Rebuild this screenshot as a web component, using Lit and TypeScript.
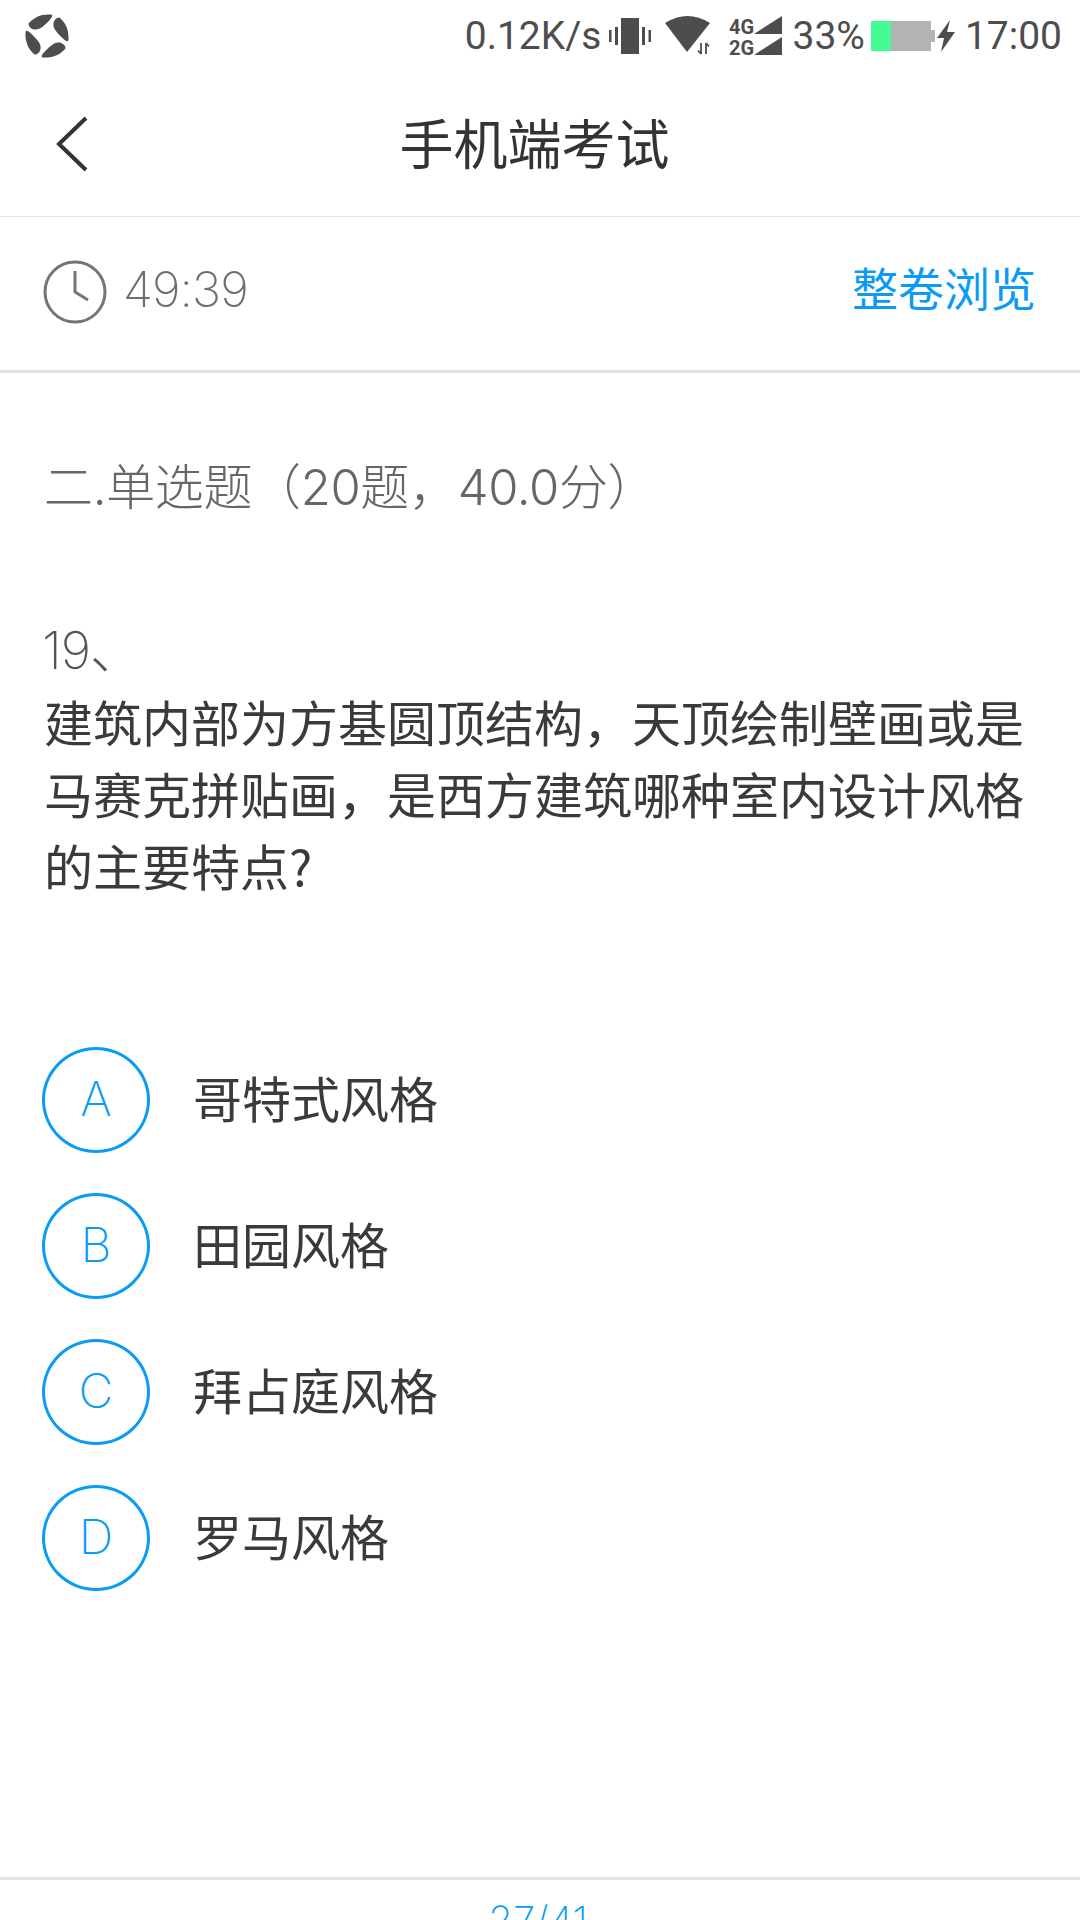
import { html, css, LitElement } from 'lit';
import { customElement } from 'lit/decorators.js';

const OPTIONS = [
  { key: 'A', text: '哥特式风格' },
  { key: 'B', text: '田园风格' },
  { key: 'C', text: '拜占庭风格' },
  { key: 'D', text: '罗马风格' },
];

const BLADE = 'M3.500 9.500C9 3 17-.3 26.500.6c1.500.4.8 2.400-1.200 4.600-3 3.400-7 7.500-11 9.600C9.500 17 3.500 14.500 3.500 9.500z';

@customElement('app-root')
export class AppRoot extends LitElement {
  static styles = css`
    :host {
      display: block;
      width: 1080px;
      height: 1920px;
      overflow: hidden;
      background: #fff;
      font-family: 'Noto Sans CJK SC', Roboto, sans-serif;
      color: #333;
    }

    .page {
      height: 1920px;
      display: flex;
      flex-direction: column;
    }

    .status {
      height: 72px;
      padding: 0 18px 0 25px;
      display: flex;
      align-items: center;
      color: #4d4d4f;
      font-family: Roboto, sans-serif;
      font-size: 39px;
      flex: none;
    }

    .status .logo {
      margin-right: auto;
    }

    .status svg {
      display: block;
      flex: none;
    }

    .speed {
      margin-right: 8px;
    }

    .vibrate {
      margin-right: 14px;
    }

    .wifi {
      margin-right: 19px;
    }

    .signal {
      margin-right: 10px;
    }

    .pct {
      margin-right: 6px;
    }

    .bolt {
      margin: 0 10px 0 2px;
    }

    .nav {
      height: 145px;
      flex: none;
      border-bottom: 1px solid #e6e6e6;
      display: grid;
      grid-template-columns: 1fr auto 1fr;
      align-items: center;
      padding: 0 67px 0 56px;
      box-sizing: border-box;
    }

    .title {
      font-size: 54px;
      font-weight: 400;
      color: #333;
      margin-bottom: 5px;
    }

    .timer {
      height: 156px;
      flex: none;
      box-sizing: border-box;
      border-bottom: 3px solid #e2e2e2;
      display: flex;
      align-items: center;
      justify-content: space-between;
      padding: 0 44px 3px 43px;
    }

    .clock {
      display: flex;
      align-items: center;
      gap: 16px;
      color: #6e6e6e;
      font-family: Inter, sans-serif;
      font-weight: 200;
      font-size: 49px;
      letter-spacing: -1px;
    }

    .clock span {
      margin-bottom: 5px;
    }

    .browse {
      color: #0a9bf5;
      font-size: 46px;
      font-weight: 400;
      margin-bottom: 12px;
    }

    .section {
      flex: none;
      margin: 80px 40px 0 44px;
      font-family: Inter, 'Noto Sans CJK SC', sans-serif;
      font-size: 49px;
      font-weight: 300;
      line-height: 70px;
      letter-spacing: -0.35px;
      color: #666;
    }

    .num {
      flex: none;
      margin: 93px 45px 0 42px;
      font-family: Inter, 'Noto Sans CJK SC', sans-serif;
      font-size: 52px;
      font-weight: 200;
      line-height: 70px;
      letter-spacing: -1px;
      color: #555;
    }

    .question {
      flex: none;
      margin: -1px 40px 0 44px;
      font-size: 49px;
      font-weight: 400;
      line-height: 72px;
      color: #3a3a3a;
    }

    .options {
      flex: 1;
      margin-top: 146px;
      padding-left: 42px;
      display: flex;
      flex-direction: column;
      gap: 40px;
    }

    .option {
      display: flex;
      align-items: center;
      gap: 43px;
      height: 106px;
    }

    .badge {
      width: 108px;
      height: 106px;
      box-sizing: border-box;
      border: 3px solid #0a9bf5;
      border-radius: 50%;
      padding-bottom: 3px;
      display: flex;
      align-items: center;
      justify-content: center;
      color: #0a9bf5;
      font-family: Inter, sans-serif;
      font-weight: 200;
      font-size: 48px;
      flex: none;
    }

    .text {
      font-size: 49px;
      font-weight: 400;
      color: #3a3a3a;
      margin-bottom: 8px;
    }

    .footer {
      flex: none;
      height: 43px;
      box-sizing: border-box;
      border-top: 3px solid #e2e2e2;
      text-align: center;
      color: #0a9bf5;
      font-family: Inter, sans-serif;
      font-weight: 200;
      font-size: 40px;
      line-height: 48px;
      padding: 17px 4px 0 0;
      overflow: hidden;
    }
  `;

  render() {
    return html`
      <div class="page">
        <div class="status">
          <svg class="logo" width="44" height="44" viewBox="0 0 44 44" fill="#4d4d4f">
            <path d=${BLADE} />
            <path d=${BLADE} transform="rotate(90 22 22)" />
            <path d=${BLADE} transform="rotate(180 22 22)" />
            <path d=${BLADE} transform="rotate(270 22 22)" />
          </svg>
          <span class="speed">0.12K/s</span>
          <svg class="vibrate" width="42" height="36" viewBox="0 0 42 36" fill="#4d4d4f">
            <rect x="12" y="0" width="18" height="36" />
            <rect x="0" y="12" width="2.5" height="12" />
            <rect x="6" y="9" width="3" height="18" />
            <rect x="33" y="9" width="3" height="18" />
            <rect x="39.5" y="12" width="2.5" height="12" />
          </svg>
          <svg class="wifi" width="45" height="40" viewBox="0 0 45 40" fill="#4d4d4f">
            <path d="M0 7Q22.5-7 45 7L22 36z" />
            <path d="M36 27v11M33 34.500l3 3.500M41 38V27M44 30.500L41 27" stroke="#4d4d4f" stroke-width="1.800" fill="none" />
          </svg>
          <svg class="signal" width="53" height="40" viewBox="0 0 53 40" fill="#4d4d4f">
            <path d="M53 0v18H25z" />
            <path d="M53 21v18H25z" />
            <text x="0" y="18" font-family="Roboto, sans-serif" font-size="20" font-weight="700">4G</text>
            <text x="0" y="39" font-family="Roboto, sans-serif" font-size="20" font-weight="700">2G</text>
          </svg>
          <span class="pct">33%</span>
          <svg width="64" height="30" viewBox="0 0 64 30">
            <rect x="0" y="0" width="20" height="30" fill="#45fb93" />
            <rect x="20" y="0" width="40" height="30" fill="#b3b3b3" />
            <rect x="60" y="9" width="4" height="12" fill="#b3b3b3" />
          </svg>
          <svg class="bolt" width="18" height="32" viewBox="0 0 18 32" fill="#4d4d4f">
            <path d="M13 0 0 18h7L4 32 18 12H10z" />
          </svg>
          <span>17:00</span>
        </div>

        <div class="nav">
          <svg width="32" height="56" viewBox="0 0 32 56" fill="none" stroke="#333" stroke-width="4">
            <path d="M30 2 3 28l27 26" />
          </svg>
          <div class="title">手机端考试</div>
          <div></div>
        </div>

        <div class="timer">
          <div class="clock">
            <svg width="64" height="64" viewBox="0 0 64 64" fill="none" stroke="#757575" stroke-width="3">
              <circle cx="32" cy="32" r="30" />
              <path d="M32 11v21l13 8" />
            </svg>
            <span>49:39</span>
          </div>
          <div class="browse">整卷浏览</div>
        </div>

        <div class="section">二.单选题（20题，40.0分）</div>
        <div class="num">19、</div>
        <div class="question">建筑内部为方基圆顶结构，天顶绘制壁画或是马赛克拼贴画，是西方建筑哪种室内设计风格的主要特点?</div>

        <div class="options">
          ${OPTIONS.map(
            (o) => html`
              <div class="option">
                <div class="badge">${o.key}</div>
                <div class="text">${o.text}</div>
              </div>
            `
          )}
        </div>

        <div class="footer">27/41</div>
      </div>
    `;
  }
}

declare global {
  interface HTMLElementTagNameMap {
    'app-root': AppRoot;
  }
}
